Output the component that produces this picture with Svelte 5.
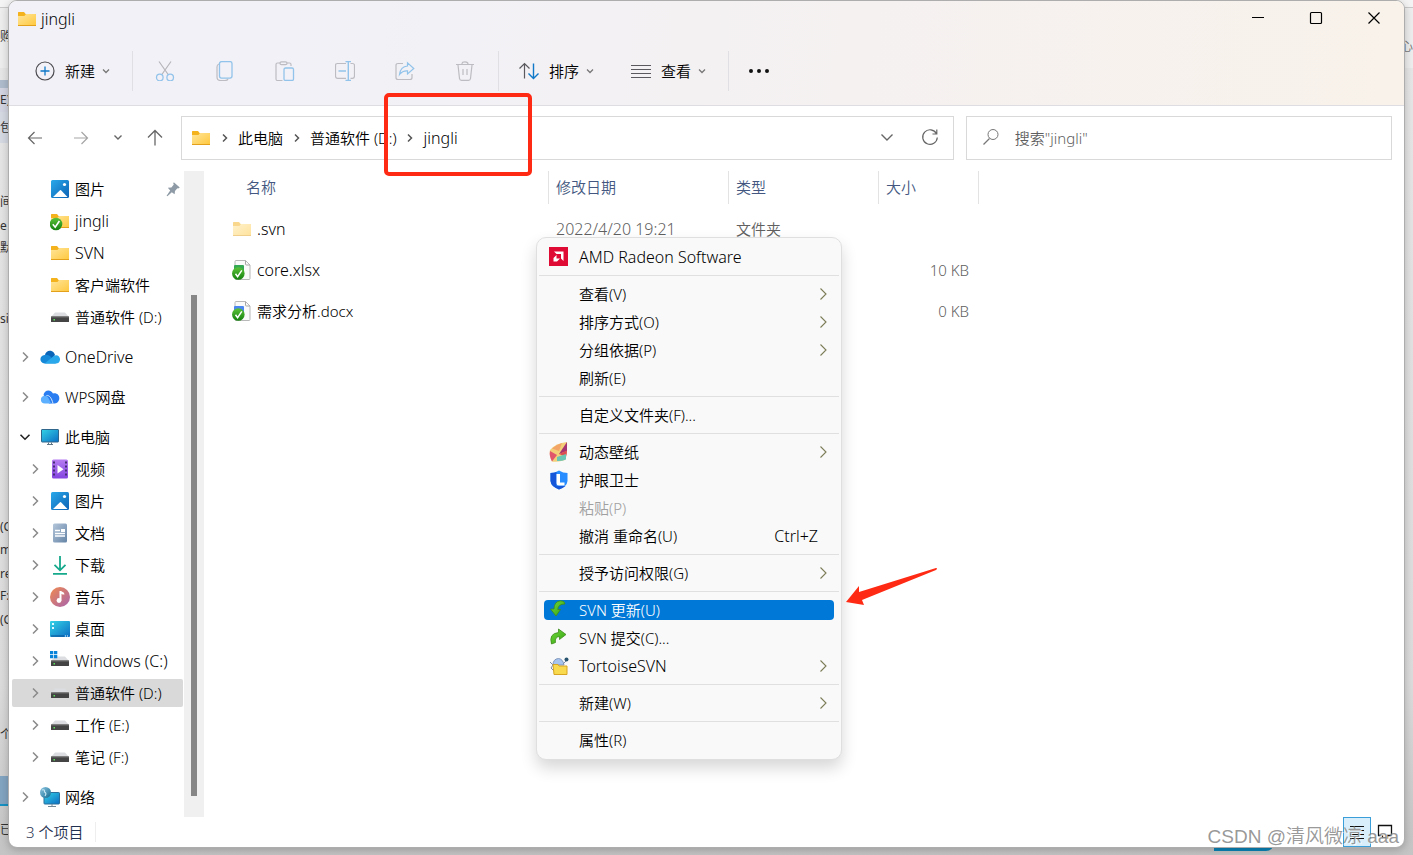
<script lang="ts">
    type TreeItem = {
        name: string;
        icon: string;
        level: number;
        arrow?: 'closed' | 'open';
        pinned?: boolean;
        gap?: boolean;
    };

    type MenuItem = {
        label: string;
        icon?: string;
        sub?: boolean;
        shortcut?: string;
        disabled?: boolean;
    };

    const tree: Array<TreeItem> = [
        { name: '图片', icon: 'picture', level: 2, pinned: true },
        { name: 'jingli', icon: 'folder-ok', level: 2 },
        { name: 'SVN', icon: 'folder', level: 2 },
        { name: '客户端软件', icon: 'folder', level: 2 },
        { name: '普通软件 (D:)', icon: 'drive', level: 2 },
        { name: 'OneDrive', icon: 'onedrive', level: 1, arrow: 'closed', gap: true },
        { name: 'WPS网盘', icon: 'wps', level: 1, arrow: 'closed', gap: true },
        { name: '此电脑', icon: 'pc', level: 1, arrow: 'open', gap: true },
        { name: '视频', icon: 'video', level: 2, arrow: 'closed' },
        { name: '图片', icon: 'picture', level: 2, arrow: 'closed' },
        { name: '文档', icon: 'document', level: 2, arrow: 'closed' },
        { name: '下载', icon: 'download', level: 2, arrow: 'closed' },
        { name: '音乐', icon: 'music', level: 2, arrow: 'closed' },
        { name: '桌面', icon: 'desktop', level: 2, arrow: 'closed' },
        { name: 'Windows (C:)', icon: 'drive-win', level: 2, arrow: 'closed' },
        { name: '普通软件 (D:)', icon: 'drive', level: 2, arrow: 'closed' },
        { name: '工作 (E:)', icon: 'drive', level: 2, arrow: 'closed' },
        { name: '笔记 (F:)', icon: 'drive', level: 2, arrow: 'closed' },
        { name: '网络', icon: 'network', level: 1, arrow: 'closed', gap: true }
    ];

    const files = [
        { name: '.svn', icon: 'folder-pale', date: '2022/4/20 19:21', type: '文件夹', size: '' },
        { name: 'core.xlsx', icon: 'xlsx', date: '', type: '', size: '10 KB' },
        { name: '需求分析.docx', icon: 'docx', date: '', type: '', size: '0 KB' }
    ];

    const menu: Array<Array<MenuItem>> = [
        [{ label: 'AMD Radeon Software', icon: 'amd' }],
        [
            { label: '查看(V)', sub: true },
            { label: '排序方式(O)', sub: true },
            { label: '分组依据(P)', sub: true },
            { label: '刷新(E)' }
        ],
        [{ label: '自定义文件夹(F)...' }],
        [
            { label: '动态壁纸', icon: 'wallpaper', sub: true },
            { label: '护眼卫士', icon: 'shield' },
            { label: '粘贴(P)', disabled: true },
            { label: '撤消 重命名(U)', shortcut: 'Ctrl+Z' }
        ],
        [{ label: '授予访问权限(G)', sub: true }],
        [
            { label: 'SVN 更新(U)', icon: 'update' },
            { label: 'SVN 提交(C)...', icon: 'commit' },
            { label: 'TortoiseSVN', icon: 'tortoise', sub: true }
        ],
        [{ label: '新建(W)', sub: true }],
        [{ label: '属性(R)' }]
    ];

    const editTools = [
        { icon: 'cut', label: '剪切' },
        { icon: 'copy', label: '复制' },
        { icon: 'paste', label: '粘贴' },
        { icon: 'rename', label: '重命名' },
        { icon: 'share', label: '共享' },
        { icon: 'trash', label: '删除' }
    ];

    const crumbs = ['此电脑', '普通软件 (D:)', 'jingli'];

    // bits of the windows lying underneath
    const scraps = [
        { text: '购', top: 28 },
        { text: 'E)', top: 91 },
        { text: '包含', top: 119 },
        { text: '间的', top: 193 },
        { text: 'e', top: 217 },
        { text: '默认', top: 239 },
        { text: 'sio', top: 310 },
        { text: '(C', top: 518 },
        { text: 'm', top: 541 },
        { text: 're', top: 565 },
        { text: 'F:)', top: 587 },
        { text: '(G', top: 611 },
        { text: '个', top: 726 },
        { text: '已装', top: 821 }
    ];

    let selectedTree = $state(15);
    let activeItem = $state('SVN 更新(U)');
    let search = $state('');

    // latin-only labels are set one size up so they look even beside the chinese ones
    const isLatin = (text: string) => /^[\x20-\x7e]+$/.test(text);
</script>

{#snippet icon(name: string)}
    <svg class="icon" width="20" height="20" viewBox="0 0 20 20" fill="none" aria-hidden="true">
        {#if name === 'folder' || name === 'folder-ok' || name === 'folder-pale'}
            <g opacity={name === 'folder-pale' ? 0.5 : 1}>
                <path d="M1 3.6Q1 3 1.6 3H7l1.6 2H18.4Q19 5 19 5.6V9H1Z" fill="#f4b21d" />
                <path d="M1 7H7.4L9 5H18.4Q19 5 19 5.6V16.4Q19 17 18.4 17H1.6Q1 17 1 16.4Z" fill="url(#gFolder)" />
                <path d="M1 16.5H19" stroke="#e3a01b" />
            </g>
            {#if name === 'folder-ok'}
                <circle cx="6" cy="13" r="6.300" fill="url(#gOk)" />
                <path d="M2.800 13.300L5.200 16.200L9.400 10" stroke="#fff" stroke-width="1.600" />
            {/if}
        {:else if name === 'xlsx' || name === 'docx'}
            <path d="M3 1.5Q3 .5 4 .5H13.5L18 5V18.500Q18 19.500 17 19.500H4Q3 19.500 3 18.500Z" fill="#fafafa" stroke="#b8b8b8" />
            <path d="M13.500 .5V4Q13.500 5 14.500 5H18" stroke="#a8a8a8" />
            <rect x="2" y="5" width="10" height="8" rx="1" fill={name === 'xlsx' ? '#35a853' : '#4b86f0'} />
            <circle cx="6.300" cy="13.500" r="6.300" fill="url(#gOk)" />
            <path d="M3.500 13.800L5.600 16.600L9.800 10.400" stroke="#fff" stroke-width="1.500" />
        {:else if name === 'picture'}
            <rect x="1" y="1" width="18" height="18" rx="1.500" fill="url(#gBlue)" />
            <path d="M3 18L10 11.200Q10.500 10.800 11 11.200L17.500 18Z" fill="#fff" />
            <circle cx="14.500" cy="5.500" r="1.600" fill="#fff" />
        {:else if name === 'drive' || name === 'drive-win'}
            <path d="M5 5.500H15L19 10H1Z" fill="#dcdde0" />
            <rect x="1" y="9.500" width="18" height="5.500" rx=".6" fill="#444" />
            <rect x="1" y="9.500" width="18" height="1" fill="#6f6f6f" />
            <rect x="3.500" y="12" width="1.500" height="1.500" fill="#5de35d" />
            {#if name === 'drive-win'}
                <path d="M0 0h3.300v3.300H0zM4 0h3.300v3.300H4zM0 4h3.300v3.300H0zM4 4h3.300v3.300H4z" fill="#0a84d8" />
            {/if}
        {:else if name === 'onedrive'}
            <path d="M5 8C5.500 4.500 9 2.800 12 4.200C14 5 14.500 6.500 15 8L11 13H3Z" fill="#0a64b8" />
            <path d="M4.600 16.500C-.8 16-1.200 8.500 4.700 8C7 7.500 9 8.500 10.500 9.500L16 16.500Z" fill="#1589d8" />
            <path d="M4.600 16.500L13.500 9.200C17 6.500 20.500 9.500 20 13C19.700 15.500 18 16.500 16 16.500Z" fill="#2aa8ec" />
        {:else if name === 'wps'}
            <path d="M3.500 8C4 3 10.500 1.500 13 6.500C18 5.500 20.500 10 18.800 13.500C18 15.500 16.500 16.500 14.500 16.500H9Z" fill="#2a7df0" />
            <path d="M5 16.500C-.5 16.500-.3 9 4.500 8.800C8 8.500 9 12 11.200 16.500Z" fill="#5cb0ff" />
            <path d="M6.500 8.500C9.500 8 11.500 11 13 16.500" stroke="#d8ecff" />
        {:else if name === 'pc'}
            <rect x="1.500" y="2.500" width="17" height="12.500" rx=".5" fill="url(#gScreen)" stroke="#30668c" />
            <path d="M8.500 15.500V17.500M11.500 15.500V17.500M7 17.500H13" stroke="#607686" />
        {:else if name === 'video'}
            <rect x="2" y=".5" width="16" height="19" rx="1.500" fill="url(#gVideo)" />
            <path d="M4 2.500V18M16 2.500V18" stroke="#472c76" stroke-width="2" stroke-dasharray="2 2" />
            <path d="M7.500 6V14.500L13.500 10.200Z" fill="#fff" />
        {:else if name === 'document'}
            <rect x="3" y=".5" width="14" height="19" rx="1.500" fill="url(#gDoc)" />
            <path d="M5 7.500H10M5 10.500H15M5 13H15" stroke="#fff" stroke-width="1.300" />
            <rect x="11" y="6" width="4" height="3" fill="#fff" />
        {:else if name === 'download'}
            <path d="M10 1V15M4.500 9.800L10 15.300L15.500 9.800M3 18.800H17" stroke="#16a98c" stroke-width="1.800" />
        {:else if name === 'music'}
            <circle cx="10" cy="10" r="10" fill="url(#gMusic)" />
            <path d="M10.500 4V13.500M10.500 4.700C11 6 13.500 5.500 13.500 7.500" stroke="#fff" stroke-width="2" />
            <circle cx="9" cy="13.500" r="2.400" fill="#fff" />
        {:else if name === 'desktop'}
            <rect y="2" width="20" height="16" rx="1" fill="url(#gScreen)" />
            <path d="M2 4h2v2H2zM2 8h2v2H2z" fill="#dff8ff" />
            <path d="M1 17H14" stroke="#0a4f92" />
            <path d="M15 17H19" stroke="#fff" stroke-dasharray="1 1" />
        {:else if name === 'network'}
            <rect x="4" y="5.500" width="15.500" height="11.500" rx=".7" fill="url(#gScreen)" stroke="#2a6f9b" />
            <path d="M12 17V19M8 19.500H16" stroke="#708796" />
            <circle cx="5.500" cy="5.500" r="5.500" fill="url(#gGlobe)" />
            <path d="M2 3Q5 2 4.500 5Q7 6 5 9" stroke="#c7e6f2" stroke-width="1.200" />
        {:else if name === 'amd'}
            <rect x="0" y="0" width="19" height="19" fill="#df0b35" />
            <path d="M5 4.500H14.500V14L12 11.500V7H7.500Z" fill="#fff" />
            <path d="M7.500 8L4.500 11V14.500H8L11 11.500H7.500Z" fill="#fff" />
        {:else if name === 'wallpaper'}
            <path d="M1 8Q7 1 18 0Q18.500 10 16 18Q9 20.500 3 19.500Q0 14 1 8Z" fill="#f2cf78" />
            <path d="M1 9L8 13L3 19.500Q0 14 1 9Z" fill="#e0566a" />
            <path d="M3 6.500Q8 2 13 1L10 9Z" fill="#f3a467" />
            <path d="M18 0L10 12L18 9Z" fill="#a63372" />
            <path d="M10 12L18 8.500Q18 13 17 15Z" fill="#dc4f51" />
            <path d="M8 15L17 12V17.500Q12 19.500 8 19Z" fill="#69c6b4" />
        {:else if name === 'shield'}
            <path d="M10 0.500Q14 3 18.500 3V11Q18 16.500 10 19.500Q2 16.500 1.500 11V3Q6 3 10 .5Z" fill="#268cff" />
            <path d="M1.500 3Q5 3 7.500 2V16H16.500Q14 18 10 19.500Q2 16.500 1.500 11Z" fill="#1557d8" />
            <path d="M7.500 4H11V12.500H15.500V15.500H10Q7.500 15.500 7.500 13Z" fill="#fff" />
        {:else if name === 'update'}
            <path d="M16 4Q15.500 .5 11.500 .8Q5 1.500 5 9H1.500L7 16L11.500 9.500H8.800Q9 4 16 4Z" fill="url(#gArrow)" stroke="#3d8a1c" stroke-width=".8" />
        {:else if name === 'commit'}
            <path d="M2.500 16Q-.5 5.500 9.500 4.500V1L17 6.500L10.500 11.500V8.500Q5.500 9 6.500 14.500Z" fill="url(#gArrow)" stroke="#3d8a1c" stroke-width=".8" />
        {:else if name === 'tortoise'}
            <path d="M4 9Q4 3 9.500 2.500Q14 3 15 9Z" fill="#a7c4ee" stroke="#7f96bb" />
            <path d="M1 6L4 9L2 12L5 15M14 8L18 4" stroke="#7d8ca4" />
            <circle cx="17.500" cy="3.500" r="2" fill="#27536f" />
            <path d="M4 8.500H9L10 10H18V18.500H5Z" fill="#f9d94e" stroke="#d7a521" />
        {:else if name === 'new'}
            <circle cx="10" cy="10" r="9" stroke="#4c4c50" stroke-width="1.200" />
            <path d="M10 5.500V14.500M5.500 10H14.500" stroke="#0f78c8" stroke-width="1.300" />
        {:else if name === 'cut'}
            <path d="M4 .5L13.500 14M16 .5L6.500 14" stroke="#b5b5ba" stroke-width="1.200" />
            <circle cx="4.800" cy="16.500" r="3.300" stroke="#92c3ea" stroke-width="1.300" />
            <circle cx="15.200" cy="16.500" r="3.300" stroke="#92c3ea" stroke-width="1.300" />
        {:else if name === 'copy'}
            <path d="M4 3Q2 3.500 2 6V16Q2 19.500 5.500 19.500H10Q12.500 19.500 13 18" stroke="#bcbcc2" stroke-width="1.200" />
            <rect x="4.500" y=".6" width="12.500" height="16.500" rx="2" stroke="#92c3ea" stroke-width="1.300" />
        {:else if name === 'paste'}
            <path d="M7.500 19.500H2.500Q1 19.500 1 18V3.500Q1 2 2.500 2H5M12 2H14.500Q16 2 16 3.500V5" stroke="#bcbcc2" stroke-width="1.200" />
            <rect x="5" y=".8" width="7" height="2.800" rx="1.400" stroke="#bcbcc2" stroke-width="1.200" />
            <rect x="9" y="7" width="9.500" height="12.400" rx="1.500" stroke="#92c3ea" stroke-width="1.300" />
        {:else if name === 'rename'}
            <path d="M11 2.500H2.500Q.5 2.500 .5 4.500V15Q.5 17.300 2.500 17.300H11M15.500 2.500H17.500Q19.500 2.500 19.500 4.500V15Q19.500 17.300 17.500 17.300H15.500" stroke="#bcbcc2" stroke-width="1.200" />
            <path d="M10.500 .6H16M10.500 19.400H16M13.300 .6V19.400M3.500 10H11" stroke="#92c3ea" stroke-width="1.400" />
        {:else if name === 'share'}
            <path d="M8 2.500H3Q1 2.500 1 4.500V16.500Q1 18.500 3 18.500H15Q17 18.500 17 16.500V13" stroke="#bcbcc2" stroke-width="1.200" />
            <path d="M4.500 13.500Q5.500 5.500 12.500 5V1.800L18.800 7.500L12.500 13V9.800Q7.500 9.500 4.500 13.500Z" stroke="#92c3ea" stroke-width="1.200" />
        {:else if name === 'trash'}
            <path d="M1 3.500H19M7 3Q7 .8 10 .8Q13 .8 13 3M3 4L4.500 17.500Q4.700 19.400 6.500 19.400H13.500Q15.300 19.400 15.500 17.500L17 4M8 8V14M12 8V14" stroke="#bcbcc2" stroke-width="1.200" />
        {:else if name === 'sort'}
            <path d="M5.500 2.500V17.500M.5 7.500L5.500 2.500L10.500 7.500" stroke="#5a5a5e" stroke-width="1.200" />
            <path d="M14.500 2.500V17.500M9.500 12.500L14.500 17.500L19.500 12.500" stroke="#0f78c8" stroke-width="1.400" />
        {:else if name === 'view'}
            <path d="M0 4.500H20M0 8.500H20M0 12.500H20M0 16.500H20" stroke="#5a5a5e" stroke-width="1.200" />
        {:else if name === 'more'}
            <path d="M0 10a2 2 0 1 0 4 0a2 2 0 1 0-4 0M8 10a2 2 0 1 0 4 0a2 2 0 1 0-4 0M16 10a2 2 0 1 0 4 0a2 2 0 1 0-4 0" fill="#111" />
        {:else if name === 'back'}
            <path d="M17 10H3.500M9.500 4L3.500 10L9.500 16" stroke="#666" stroke-width="1.200" />
        {:else if name === 'forward'}
            <path d="M3 10H16.500M10.500 4L16.500 10L10.500 16" stroke="#a5a5a5" stroke-width="1.200" />
        {:else if name === 'up'}
            <path d="M10 17.500V2.500M3 9.500L10 2.500L17 9.500" stroke="#666" stroke-width="1.300" />
        {:else if name === 'down'}
            <path d="M4.500 6.500L10 12L15.500 6.500" stroke="#666" stroke-width="1.400" />
        {:else if name === 'down-s'}
            <path d="M6.500 7.500L10 11L13.500 7.500" stroke="#666" stroke-width="1.400" />
        {:else if name === 'refresh'}
            <path d="M16.500 5.700A7.300 7.300 0 1 0 17.300 9.500M16.800 1.500V6H12.500" stroke="#666" stroke-width="1.200" />
        {:else if name === 'search'}
            <circle cx="12" cy="6.500" r="5" stroke="#777" />
            <path d="M8.500 10.500L2.500 16.500" stroke="#777" stroke-width="1.200" />
        {:else if name === 'pin'}
            <path d="M11 1.500L18.500 8L16.500 9.500L15.500 9L12.500 12.500L12 16.500L8.500 14L3 19L2 18.500L6.500 12L3.500 8.500L8 8L11 4.500L10.300 3Z" fill="#8e9aa5" />
        {:else if name === 'minimize'}
            <path d="M4 8.500H16" stroke="#000" />
        {:else if name === 'maximize'}
            <rect x="4.500" y="3.500" width="11" height="11" rx="1" stroke="#000" stroke-width="1.200" />
        {:else if name === 'close'}
            <path d="M4.500 3.500L15.500 14.500M15.500 3.500L4.500 14.500" stroke="#000" stroke-width="1.200" />
        {:else if name === 'details'}
            <path d="M3 4.500H17M3 8.500H17M3 12.500H17M3 16.500H17" stroke="#111" stroke-width="1.200" />
        {:else if name === 'large'}
            <path d="M3.500 3.500H16.500V13.500H12.500V16H7.500V13.500H3.500Z" stroke="#111" stroke-width="1.300" />
        {/if}
    </svg>
{/snippet}

{#snippet chevron(dir: string)}
    <svg class="chevron" width="12" height="12" viewBox="0 0 12 12" fill="none" stroke="currentColor" stroke-width="1.300" aria-hidden="true">
        {#if dir === 'down'}
            <path d="M1.500 3.800L6 8.200L10.500 3.800" stroke-width="1.600" />
        {:else if dir === 'small'}
            <path d="M3 4.500L6 7.500L9 4.500" />
        {:else if dir === 'crumb'}
            <path d="M4 2.500L7.500 6L4 9.500" stroke-width="1.500" />
        {:else if dir === 'tree'}
            <path d="M4 1.500L8.500 6L4 10.500" stroke-width="1.500" />
        {:else}
            <path d="M3.500 .5L9 6L3.500 11.500" stroke-width="1.100" />
        {/if}
    </svg>
{/snippet}

<svg class="defs" width="0" height="0" aria-hidden="true">
    <linearGradient id="gFolder" x2="1" y2="1"><stop stop-color="#ffe59a" /><stop offset="1" stop-color="#ffc83d" /></linearGradient>
    <linearGradient id="gOk" x2="0" y2="1"><stop stop-color="#5cc338" /><stop offset="1" stop-color="#14800f" /></linearGradient>
    <linearGradient id="gArrow" x2="1" y2="1"><stop stop-color="#6fd63a" /><stop offset="1" stop-color="#36a612" /></linearGradient>
    <linearGradient id="gBlue" x2="1" y2="1"><stop stop-color="#29a9ea" /><stop offset="1" stop-color="#0d62b5" /></linearGradient>
    <linearGradient id="gScreen" x2="1" y2="1"><stop stop-color="#34d3e6" /><stop offset="1" stop-color="#0c6dc4" /></linearGradient>
    <linearGradient id="gVideo" x2="0" y2="1"><stop stop-color="#b67cf2" /><stop offset="1" stop-color="#8345e0" /></linearGradient>
    <linearGradient id="gDoc" x2="1" y2="1"><stop stop-color="#b4c6da" /><stop offset="1" stop-color="#6584a6" /></linearGradient>
    <linearGradient id="gMusic" x2="1" y2="1"><stop stop-color="#f08a4e" /><stop offset="1" stop-color="#a864ae" /></linearGradient>
    <linearGradient id="gGlobe" x2="1" y2="1"><stop stop-color="#8fc8e4" /><stop offset="1" stop-color="#12688f" /></linearGradient>
</svg>

<div class="screen">
    <div class="behind">
        <div class="band title-band"></div>
        <div class="band tab-band"></div>
        <div class="band blue-band"></div>
        <div class="pill"></div>
        {#each scraps as scrap}
            <span class="scrap" style="top: {scrap.top}px">{scrap.text}</span>
        {/each}
        <span class="scrap-right">中心</span>
    </div>

    <main class="window">
        <header>
            <div class="titlebar">
                {@render icon('folder')}
                <h1 class="latin">jingli</h1>
                <div class="controls">
                    <button aria-label="最小化">{@render icon('minimize')}</button>
                    <button aria-label="最大化">{@render icon('maximize')}</button>
                    <button aria-label="关闭">{@render icon('close')}</button>
                </div>
            </div>
            <div class="toolbar">
                <button class="tool">{@render icon('new')}<span>新建{@render chevron('small')}</span></button>
                <i class="sep"></i>
                {#each editTools as tool}
                    <button class="tool-icon" aria-label={tool.label} disabled>{@render icon(tool.icon)}</button>
                {/each}
                <i class="sep"></i>
                <button class="tool">{@render icon('sort')}<span>排序{@render chevron('small')}</span></button>
                <button class="tool">{@render icon('view')}<span>查看{@render chevron('small')}</span></button>
                <i class="sep"></i>
                <button class="tool-icon more" aria-label="更多">{@render icon('more')}</button>
            </div>
        </header>

        <div class="navbar">
            <button class="nav-btn" aria-label="后退">{@render icon('back')}</button>
            <button class="nav-btn" aria-label="前进">{@render icon('forward')}</button>
            <button class="nav-btn narrow" aria-label="最近">{@render icon('down-s')}</button>
            <button class="nav-btn" aria-label="向上">{@render icon('up')}</button>
            <div class="address">
                {@render icon('folder')}
                {#each crumbs as crumb}
                    <span class="crumb-arrow">{@render chevron('crumb')}</span>
                    <button class="crumb" class:latin={isLatin(crumb)}>{crumb}</button>
                {/each}
                <div class="address-end">
                    <button aria-label="展开">{@render icon('down')}</button>
                    <button aria-label="刷新">{@render icon('refresh')}</button>
                </div>
            </div>
            <label class="search">
                {@render icon('search')}
                <input type="text" aria-label="搜索" placeholder={'搜索"jingli"'} bind:value={search} />
            </label>
        </div>

        <div class="content">
            <nav>
                {#each tree as item, i}
                    <button
                        class="row"
                        class:child={item.level === 2}
                        class:gap={item.gap}
                        class:selected={selectedTree === i}
                        onclick={() => (selectedTree = i)}
                    >
                        <span class="arrow" class:open={item.arrow === 'open'}>
                            {#if item.arrow}{@render chevron(item.arrow === 'open' ? 'down' : 'tree')}{/if}
                        </span>
                        {@render icon(item.icon)}
                        <span class="name" class:latin={isLatin(item.name)}>{item.name}</span>
                        {#if item.pinned}<span class="pin">{@render icon('pin')}</span>{/if}
                    </button>
                {/each}
            </nav>
            <div class="scrollbar"><div class="thumb"></div></div>

            <section class="files">
                <table>
                    <thead>
                        <tr>
                            <th class="col-name"><span>名称</span></th>
                            <th class="col-date"><span>修改日期</span></th>
                            <th class="col-type"><span>类型</span></th>
                            <th class="col-size"><span>大小</span></th>
                        </tr>
                    </thead>
                    <tbody>
                        {#each files as file}
                            <tr>
                                <td>
                                    <div class="file" class:latin={isLatin(file.name)}>{@render icon(file.icon)}{file.name}</div>
                                </td>
                                <td class="latin">{file.date}</td>
                                <td>{file.type}</td>
                                <td class="size">{file.size}</td>
                            </tr>
                        {/each}
                    </tbody>
                </table>

                <div class="menu" role="menu">
                    {#each menu as group}
                        <div class="group">
                            {#each group as item}
                                <button
                                    role="menuitem"
                                    class="menu-item"
                                    class:active={activeItem === item.label}
                                    disabled={item.disabled}
                                    onmouseenter={() => (activeItem = item.label)}
                                >
                                    <span class="menu-icon">{#if item.icon}{@render icon(item.icon)}{/if}</span>
                                    <span class:latin={isLatin(item.label)}>{item.label}</span>
                                    {#if item.shortcut}<span class="shortcut latin">{item.shortcut}</span>{/if}
                                    {#if item.sub}<span class="sub">{@render chevron('right')}</span>{/if}
                                </button>
                            {/each}
                        </div>
                    {/each}
                </div>
            </section>
        </div>

        <footer>
            <span class="count">3 个项目</span>
            <div class="views">
                <button class="on" aria-label="详细信息">{@render icon('details')}</button>
                <button aria-label="大图标">{@render icon('large')}</button>
            </div>
        </footer>
    </main>

    <div class="mark-box"></div>
    <svg class="mark-arrow" width="94" height="40" viewBox="0 0 94 40" aria-hidden="true">
        <path d="M1 35L14 19V25L91 1Q93 1 91 3L17 33L19 38Z" fill="#ff2a14" />
    </svg>
    <div class="watermark">CSDN @清风微凉 aaa</div>
</div>

<style>
    :global(body) {
        margin: 0;
    }

    .screen {
        position: relative;
        display: flex;
        box-sizing: border-box;
        min-height: 100vh;
        padding: 0 8px 7px;
        overflow: hidden;
        background: #d9d9d9;
        font-family: "Noto Sans", "Noto Sans CJK SC", sans-serif;
        font-size: 15px;
        font-weight: 350;
        line-height: 20px;
        color: #000;
    }

    .defs {
        position: absolute;
    }

    button {
        padding: 0;
        border: none;
        background: none;
        font: inherit;
        color: inherit;
        white-space: nowrap;
    }

    .icon,
    .chevron {
        display: block;
        flex: none;
    }

    .latin {
        font-size: 16px;
    }

    /* underneath */
    .behind {
        position: absolute;
        inset: 0;
        background: linear-gradient(#e8e8e8, #dcdcdc 80%, #c4c4c4);
    }

    .band {
        position: absolute;
        left: 0;
        right: 0;
    }

    .title-band {
        top: 0;
        height: 68px;
        background: linear-gradient(#f4f4f4 7px, #c9c9c9 7px, #c9c9c9 8px, #eee 8px);
    }

    .tab-band {
        top: 80px;
        right: auto;
        width: 9px;
        height: 63px;
        background: linear-gradient(#aebccd 8px, #d3d5e2 8px, #d3d5e2 32px, #d5dae3 32px);
    }

    .blue-band {
        top: 776px;
        right: auto;
        width: 9px;
        height: 28px;
        background: #83a5c2;
        border-bottom: 2px solid #1692c4;
    }

    .pill {
        position: absolute;
        right: 139px;
        bottom: 4px;
        width: 60px;
        height: 14px;
        border-radius: 0 0 8px 0;
        background: #0a84b8;
    }

    .scrap,
    .scrap-right {
        position: absolute;
        font-size: 12px;
        font-weight: 400;
        line-height: 18px;
        color: #333;
        white-space: nowrap;
    }

    .scrap {
        left: 0;
    }

    .scrap-right {
        right: 0;
        top: 38px;
        color: #777;
    }

    /* window */
    .window {
        position: relative;
        display: flex;
        flex: 1;
        flex-direction: column;
        min-width: 0;
        border: 1px solid #adadad;
        border-radius: 9px;
        background: #fff;
        box-shadow: 0 2px 8px rgba(0, 0, 0, 0.22);
        overflow: hidden;
    }

    header {
        border-bottom: 1px solid #dedee2;
        background: linear-gradient(95deg, #f1f1f7 20%, #f5f1f1 60%, #f8f2ea);
    }

    .titlebar {
        display: flex;
        align-items: center;
        height: 36px;
        padding-left: 8px;
    }

    h1 {
        margin: 0 0 0 4px;
        font-weight: inherit;
    }

    .controls {
        display: flex;
        margin-left: auto;
        padding-right: 1px;

        & button {
            display: grid;
            place-items: center;
            width: 58px;
            height: 36px;
        }
    }

    .toolbar {
        display: flex;
        align-items: center;
        height: 68px;
        padding-left: 8px;
    }

    .tool {
        display: flex;
        align-items: center;
        gap: 10px;
        height: 40px;
        padding: 0 17px 0 18px;

        & span {
            display: flex;
            align-items: center;
            gap: 5px;
        }

        .chevron {
            color: #777;
        }
    }

    .tool-icon {
        display: grid;
        place-items: center;
        width: 60px;
        height: 40px;
    }

    .tool-icon.more {
        width: 56px;
    }

    .sep {
        width: 1px;
        height: 40px;
        margin: 0 2px 0 3px;
        background: #dfdfe4;
    }

    .navbar {
        display: flex;
        padding: 10px 12px 11px 3px;
    }

    .nav-btn {
        display: grid;
        flex: none;
        place-items: center;
        width: 46px;
    }

    .nav-btn.narrow {
        width: 28px;
    }

    .address,
    .search {
        display: flex;
        align-items: center;
        box-sizing: border-box;
        height: 44px;
        min-width: 0;
        border: 1px solid #d9d9d9;
        background: #fff;
    }

    .address {
        flex: 13;
        margin-left: 3px;
        padding-left: 9px;
    }

    .crumb-arrow {
        display: flex;
        justify-content: center;
        width: 27px;
        color: #555;
    }

    .address-end {
        display: flex;
        margin-left: auto;
        padding-right: 1px;

        & button {
            display: grid;
            place-items: center;
            width: 43px;
            height: 42px;
        }
    }

    .search {
        flex: 7;
        gap: 14px;
        margin-left: 12px;
        padding-left: 14px;

        & input {
            flex: 1;
            min-width: 0;
            padding: 0;
            border: none;
            outline: none;
            font: inherit;
        }

        & input::placeholder {
            color: #5f5f5f;
        }
    }

    .content {
        display: flex;
        flex: 1;
    }

    nav {
        flex: none;
        box-sizing: border-box;
        width: 175px;
        padding: 2px 1px 0 3px;
    }

    .row {
        display: flex;
        align-items: center;
        width: 100%;
        height: 28px;
        margin: 2px 0 4px;
        padding: 0 2px 0 5px;
        border-radius: 2px;
        text-align: left;
    }

    .row.child {
        padding-left: 15px;
    }

    .row.gap {
        margin-top: 12px;
    }

    .row.selected {
        background: #d9d9d9;
    }

    .arrow {
        display: flex;
        justify-content: center;
        width: 16px;
        margin-right: 7px;
        color: #8a8a8a;
    }

    .arrow.open {
        color: #222;
    }

    .name {
        margin-left: 5px;
    }

    .pin {
        margin-left: auto;

        .icon {
            width: 16px;
            height: 16px;
        }
    }

    .scrollbar {
        display: flex;
        flex: none;
        box-sizing: border-box;
        width: 20px;
        padding: 124px 7px 21px;
        background: #f0f0f0;
    }

    .thumb {
        flex: 1;
        background: #868686;
    }

    .files {
        position: relative;
        flex: 1;
        min-width: 0;
    }

    table {
        border-collapse: collapse;
        table-layout: fixed;
        width: 775px;
    }

    th {
        height: 37px;
        padding: 0;
        font-weight: inherit;
        text-align: left;
        vertical-align: top;
        color: #435780;

        & span {
            display: block;
            box-sizing: border-box;
            height: 33px;
            padding: 6px 7px;
            border-right: 1px solid #e3e3e3;
        }
    }

    .col-name {
        width: 345px;

        & span {
            padding-left: 42px;
        }
    }

    .col-date {
        width: 180px;
    }

    .col-type {
        width: 150px;
    }

    .col-size {
        width: 100px;
    }

    td {
        height: 41px;
        padding: 0 7px;
        color: #606060;
    }

    .file {
        display: flex;
        align-items: center;
        gap: 5px;
        padding-left: 21px;
        color: #000;
    }

    .size {
        padding-right: 10px;
        text-align: right;
    }

    /* context menu */
    .menu {
        position: absolute;
        left: 332px;
        top: 66px;
        box-sizing: border-box;
        width: 306px;
        padding: 5px 2px;
        border: 1px solid #dfdfdf;
        border-radius: 10px;
        background: #f9f9f9;
        box-shadow: 0 8px 16px rgba(0, 0, 0, 0.16);
    }

    .group {
        display: flow-root;
    }

    .group + .group {
        margin-top: 4px;
        padding-top: 4px;
        border-top: 1px solid #e0e0e0;
    }

    .menu-item {
        display: flex;
        align-items: center;
        width: 290px;
        height: 20px;
        margin: 4px 5px;
        padding-right: 5px;
        border-radius: 4px;
        text-align: left;
    }

    .menu-item + .menu-item {
        margin-top: 8px;
    }

    .menu-item.active {
        background: #0078d7;
        color: #fff;
    }

    .menu-item:disabled {
        color: #a0a0a0;
    }

    .menu-icon {
        width: 20px;
        margin: 0 10px 0 5px;
    }

    .shortcut {
        margin-left: auto;
        padding-right: 11px;
    }

    .sub {
        margin-left: auto;
        color: #7c7c58;
    }

    footer {
        display: flex;
        align-items: center;
        height: 30px;
        padding-left: 17px;
        color: #1f3050;
    }

    .count {
        padding-right: 12px;
        border-right: 1px solid #eee;
    }

    .views {
        display: flex;
        height: 100%;
        margin-left: auto;
        padding-right: 5px;

        & button {
            display: grid;
            place-items: center;
            box-sizing: border-box;
            width: 28px;
            height: 30px;
        }

        .on {
            border: 1px solid #3a9fd8;
            background: #d8effb;
        }
    }

    /* annotations */
    .mark-box {
        position: absolute;
        left: 384px;
        top: 93px;
        box-sizing: border-box;
        width: 148px;
        height: 83px;
        border: 4px solid #ff2a14;
        border-radius: 5px;
        pointer-events: none;
    }

    .mark-arrow {
        position: absolute;
        left: 845px;
        top: 567px;
        pointer-events: none;
    }

    .watermark {
        position: absolute;
        right: 14px;
        bottom: 6px;
        font-family: "Liberation Sans", "Noto Sans CJK SC", sans-serif;
        font-size: 19px;
        line-height: 24px;
        color: rgba(140, 140, 140, 0.9);
        text-shadow: 1px 1px 0 rgba(255, 255, 255, 0.8);
        pointer-events: none;
    }
</style>
